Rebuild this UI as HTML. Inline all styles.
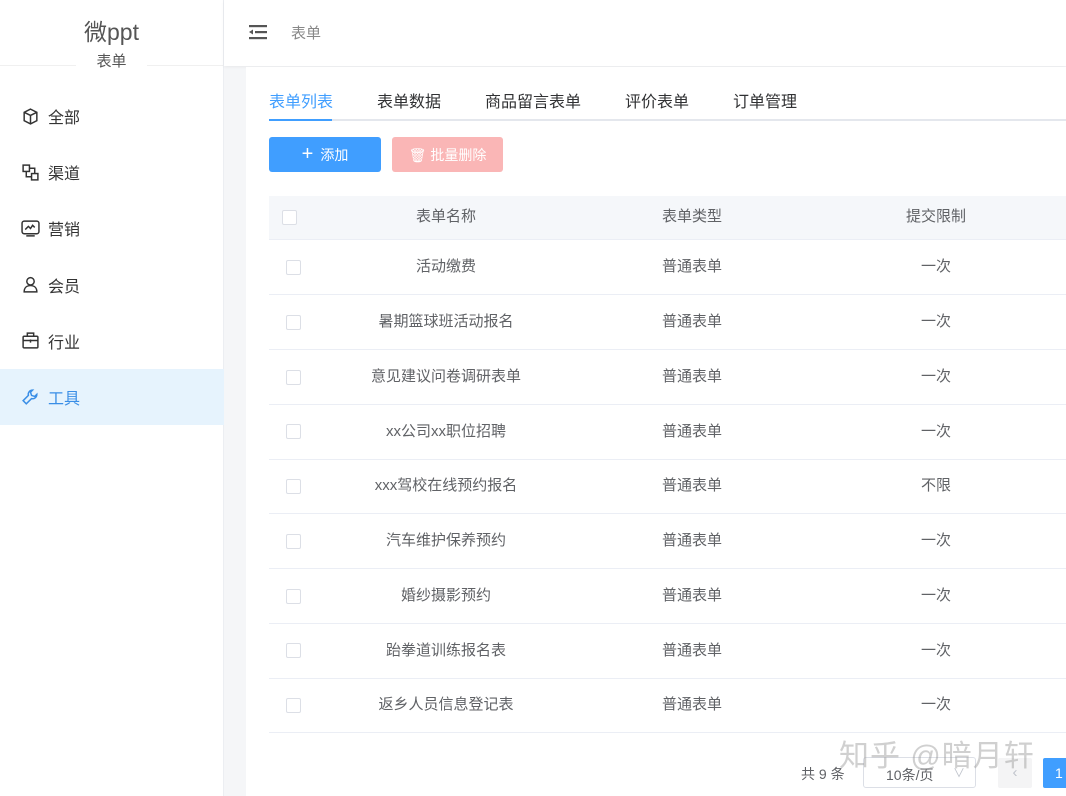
<!DOCTYPE html>
<html><head><meta charset="utf-8"><style>
*{margin:0;padding:0;box-sizing:border-box}
body{width:1066px;height:796px;overflow:hidden;background:#f5f6f8;font-family:"Liberation Sans","Noto Sans CJK SC",sans-serif;color:#606266;position:relative;font-size:15px}
.side{position:absolute;left:0;top:0;width:224px;height:796px;background:#fff;border-right:1px solid #eceef2}
.logo{height:66px;border-bottom:1px solid #f0f0f0;text-align:center}
.logo .t{font-size:23px;color:#555;padding-top:17px;line-height:30px}
.logo .s{font-size:15px;color:#555;margin-top:1px;background:#fff;display:inline-block;padding:0 20px;position:relative;top:2px}
.menu{position:absolute;top:88px;left:0;width:224px}
.mi{height:56.2px;display:flex;align-items:center;padding-left:21px;font-size:16px;color:#333}
.mi svg{width:19px;height:19px;margin-right:8px}
.mi.act{background:#e6f3fd;color:#3a8ee6}
.top{position:absolute;left:224px;top:0;right:0;height:66px;background:#fff;box-shadow:0 1px 3px rgba(0,0,0,.06)}
.main{position:absolute;left:246px;top:67px;right:0;bottom:0;background:#fff}
.tabs{position:absolute;left:23px;top:20px;right:0;height:34px;border-bottom:2px solid #e4e7ed}
.tab{position:absolute;top:1px;font-size:16px;color:#303133}
.tabs .ul{position:absolute;left:0;bottom:-2px;width:63px;height:2px;background:#409eff}
.btn{position:absolute;top:70px;height:35px;border-radius:3px;color:#fff;font-size:14px;display:flex;align-items:center;justify-content:center}
.th{position:absolute;left:23px;right:0;top:129px;height:44px;background:#f5f7fa;border-bottom:1px solid #ebeef5}
.row{position:absolute;left:23px;right:0;height:55px;border-bottom:1px solid #ebeef5}
.c{position:absolute;top:-2px;height:100%;display:flex;align-items:center;justify-content:center;font-size:15px;color:#606266;transform:translateX(-50%);white-space:nowrap}
.cb{position:absolute;left:17px;width:15px;height:15px;border:1px solid #dcdfe6;border-radius:2px;background:#fff}
</style></head><body>
<div class="side">
 <div class="logo"><div class="t">微ppt</div><div class="s">表单</div></div>
 <div class="menu">
  <div class="mi"><svg viewBox="0 0 18 18" fill="none" stroke="#333" stroke-width="1.4"><path d="M9 2l6 3v8l-6 3-6-3V5z M3 5l6 3 6-3 M9 8v8"/></svg>全部</div>
  <div class="mi"><svg viewBox="0 0 18 18" fill="none" stroke="#333" stroke-width="1.4"><rect x="2" y="2" width="6" height="6"/><rect x="10" y="10" width="6" height="6"/><path d="M5 8v5h5 M8 5h5v5"/></svg>渠道</div>
  <div class="mi"><svg viewBox="0 0 18 18" fill="none" stroke="#333" stroke-width="1.4"><rect x="1" y="2" width="16" height="12" rx="2"/><path d="M4 10l3-3 2 2 2-3 2 2 M5 16h8"/></svg>营销</div>
  <div class="mi"><svg viewBox="0 0 18 18" fill="none" stroke="#333" stroke-width="1.4"><circle cx="9" cy="6" r="3.5"/><path d="M3 16c0-4 2.5-6 6-6s6 2 6 6z"/></svg>会员</div>
  <div class="mi"><svg viewBox="0 0 18 18" fill="none" stroke="#333" stroke-width="1.4"><rect x="2" y="5" width="14" height="11" rx="1"/><path d="M6 5V2h6v3 M2 9h14 M9 8v3"/></svg>行业</div>
  <div class="mi act"><svg viewBox="0 0 18 18" fill="none" stroke="#3a8ee6" stroke-width="1.4"><path d="M11 2a4 4 0 0 0-4 5L2 12l3 3 5-5a4 4 0 0 0 5-4l-2 2-3-1-1-3z"/></svg>工具</div>
 </div>
</div>
<div class="top">
 <svg style="position:absolute;left:25px;top:24px" width="18" height="16" viewBox="0 0 18 16" fill="#555"><rect x="0" y="1" width="18" height="2.2"/><rect x="6" y="7" width="12" height="2.2"/><rect x="0" y="13" width="18" height="2.2"/><path d="M0 8l4-2.5v5z"/></svg>
 <div style="position:absolute;left:67px;top:22px;font-size:15px;color:#888">表单</div>
</div>
<div class="main">
 <div class="tabs">
  <div class="tab" style="left:0;color:#409eff">表单列表</div>
  <div class="tab" style="left:108px">表单数据</div>
  <div class="tab" style="left:216px">商品留言表单</div>
  <div class="tab" style="left:356px">评价表单</div>
  <div class="tab" style="left:464px">订单管理</div>
  <div class="ul"></div>
 </div>
 <div class="btn" style="left:23px;width:112px;background:#409eff"><span style="font-size:20px;margin-right:7px;font-weight:300">+</span>添加</div>
 <div class="btn" style="left:146px;width:111px;background:#fab6b6">🗑&nbsp;批量删除</div>
 <div class="th"><div class="cb" style="top:14px;left:13px"></div>
  <div class="c" style="left:177px;color:#606266">表单名称</div><div class="c" style="left:423px">表单类型</div><div class="c" style="left:667px">提交限制</div></div>
 <div class="row" style="top:173px"><div class="cb" style="top:20px"></div><div class="c" style="left:177px">活动缴费</div><div class="c" style="left:423px">普通表单</div><div class="c" style="left:667px">一次</div></div>
 <div class="row" style="top:228px"><div class="cb" style="top:20px"></div><div class="c" style="left:177px">暑期篮球班活动报名</div><div class="c" style="left:423px">普通表单</div><div class="c" style="left:667px">一次</div></div>
 <div class="row" style="top:283px"><div class="cb" style="top:20px"></div><div class="c" style="left:177px">意见建议问卷调研表单</div><div class="c" style="left:423px">普通表单</div><div class="c" style="left:667px">一次</div></div>
 <div class="row" style="top:338px"><div class="cb" style="top:19px"></div><div class="c" style="left:177px">xx公司xx职位招聘</div><div class="c" style="left:423px">普通表单</div><div class="c" style="left:667px">一次</div></div>
 <div class="row" style="top:392px"><div class="cb" style="top:20px"></div><div class="c" style="left:177px">xxx驾校在线预约报名</div><div class="c" style="left:423px">普通表单</div><div class="c" style="left:667px">不限</div></div>
 <div class="row" style="top:447px"><div class="cb" style="top:20px"></div><div class="c" style="left:177px">汽车维护保养预约</div><div class="c" style="left:423px">普通表单</div><div class="c" style="left:667px">一次</div></div>
 <div class="row" style="top:502px"><div class="cb" style="top:20px"></div><div class="c" style="left:177px">婚纱摄影预约</div><div class="c" style="left:423px">普通表单</div><div class="c" style="left:667px">一次</div></div>
 <div class="row" style="top:557px"><div class="cb" style="top:19px"></div><div class="c" style="left:177px">跆拳道训练报名表</div><div class="c" style="left:423px">普通表单</div><div class="c" style="left:667px">一次</div></div>
 <div class="row" style="top:611px"><div class="cb" style="top:20px"></div><div class="c" style="left:177px">返乡人员信息登记表</div><div class="c" style="left:423px">普通表单</div><div class="c" style="left:667px">一次</div></div>
 <div style="position:absolute;left:555px;top:697px;font-size:14px;color:#606266">共 9 条</div>
 <div style="position:absolute;left:617px;top:690px;width:113px;height:31px;border:1px solid #dcdfe6;border-radius:3px;font-size:14px;padding:7px 0 0 22px;color:#606266">10条/页<span style="position:absolute;right:10px;top:6px;color:#c0c4cc;font-size:12px">∨</span></div>
 <div style="position:absolute;left:752px;top:691px;width:34px;height:30px;background:#f4f4f5;border-radius:2px;color:#c0c4cc;text-align:center;line-height:30px">‹</div>
 <div style="position:absolute;left:797px;top:691px;width:34px;height:30px;background:#409eff;border-radius:2px;color:#fff;padding-left:12px;line-height:30px;font-size:14px">1</div>
 <div style="position:absolute;left:593px;top:664px;font-size:30px;color:rgba(150,150,150,.45);letter-spacing:1px">知乎 @暗月轩</div>
</div>
</body></html>
